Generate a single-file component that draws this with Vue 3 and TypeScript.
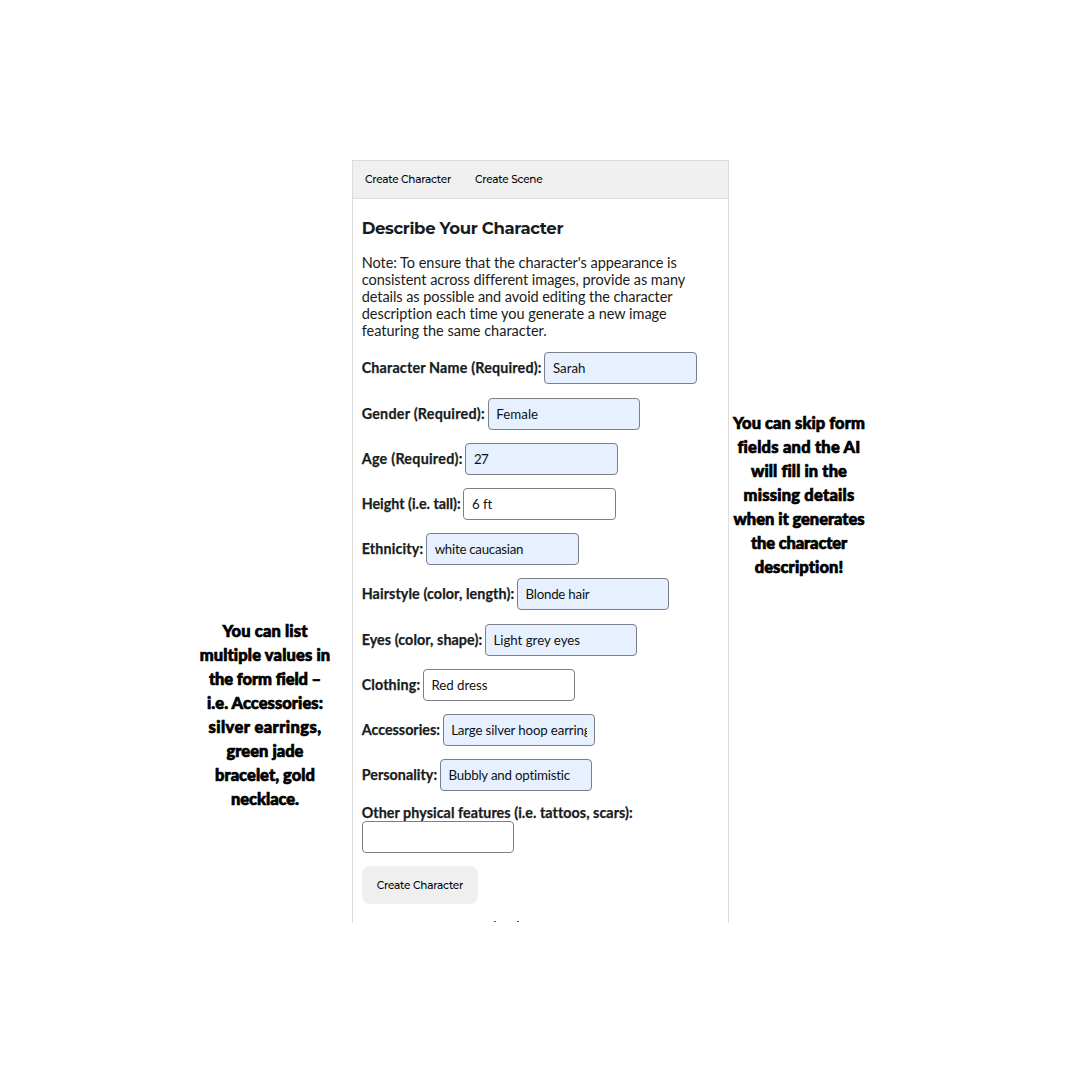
<script setup lang="ts">
interface Line { text: string; width: number }
interface Field { label: string; labelWidth: number; value: string; valueWidth: number; filled: boolean }

const tabs: Line[] = [
  { text: 'Create Character', width: 86 },
  { text: 'Create Scene', width: 67.5 },
]
const intro: Line[] = [
  { text: "Note: To ensure that the character's appearance is", width: 315 },
  { text: 'consistent across different images, provide as many', width: 323 },
  { text: 'details as possible and avoid editing the character', width: 311 },
  { text: 'description each time you generate a new image', width: 305.5 },
  { text: 'featuring the same character.', width: 185 },
]
const fields: Field[] = [
  { label: 'Character Name (Required):', labelWidth: 180, value: 'Sarah', valueWidth: 32.5, filled: true },
  { label: 'Gender (Required):', labelWidth: 123.2, value: 'Female', valueWidth: 42, filled: true },
  { label: 'Age (Required):', labelWidth: 101, value: '27', valueWidth: 14, filled: true },
  { label: 'Height (i.e. tall):', labelWidth: 99, value: '6 ft', valueWidth: 20, filled: false },
  { label: 'Ethnicity:', labelWidth: 61.7, value: 'white caucasian', valueWidth: 88.5, filled: true },
  { label: 'Hairstyle (color, length):', labelWidth: 152.5, value: 'Blonde hair', valueWidth: 64, filled: true },
  { label: 'Eyes (color, shape):', labelWidth: 120.5, value: 'Light grey eyes', valueWidth: 86.5, filled: true },
  { label: 'Clothing:', labelWidth: 58.5, value: 'Red dress', valueWidth: 56, filled: false },
  { label: 'Accessories:', labelWidth: 78.2, value: 'Large silver hoop earrings', valueWidth: 145, filled: true },
  { label: 'Personality:', labelWidth: 75.5, value: 'Bubbly and optimistic', valueWidth: 122, filled: true },
]
const leftNote: Line[] = [
  { text: 'You can list', width: 85 },
  { text: 'multiple values in', width: 131 },
  { text: 'the form field –', width: 112 },
  { text: 'i.e. Accessories:', width: 116 },
  { text: 'silver earrings,', width: 113 },
  { text: 'green jade', width: 77 },
  { text: 'bracelet, gold', width: 100 },
  { text: 'necklace.', width: 68 },
]
const rightNote: Line[] = [
  { text: 'You can skip form', width: 132 },
  { text: 'fields and the AI', width: 123 },
  { text: 'will fill in the', width: 96 },
  { text: 'missing details', width: 111 },
  { text: 'when it generates', width: 131 },
  { text: 'the character', width: 96 },
  { text: 'description!', width: 89 },
]

// Tracks a line of text so that it fills the given measure.
const vFit = {
  mounted(el: HTMLElement, binding: { value: number }) {
    const count = (el.textContent ?? '').length
    const natural = el.getBoundingClientRect().width
    el.style.letterSpacing = `${(binding.value - natural) / count}px`
  },
}
</script>

<template>
  <main class="page">
    <aside class="note note-left">
      <p v-for="l in leftNote" :key="l.text"><span v-fit="l.width">{{ l.text }}</span></p>
    </aside>

    <section class="panel">
      <nav class="tabs">
        <a v-for="t in tabs" :key="t.text"><span v-fit="t.width">{{ t.text }}</span></a>
      </nav>
      <div class="body">
        <h1><span v-fit="201.5">Describe Your Character</span></h1>
        <div class="intro">
          <p v-for="l in intro" :key="l.text"><span v-fit="l.width">{{ l.text }}</span></p>
        </div>
        <div v-for="f in fields" :key="f.label" class="field">
          <label><span v-fit="f.labelWidth">{{ f.label }}</span></label>
          <div class="input" :class="{ filled: f.filled }">
            <div class="value"><span v-fit="f.valueWidth">{{ f.value }}</span></div>
          </div>
        </div>
        <div class="other">
          <label><span v-fit="270.5">Other physical features (i.e. tattoos, scars):</span></label>
          <div class="input"></div>
        </div>
        <button type="button"><span v-fit="86.5">Create Character</span></button>
        <div class="cutoff"><i></i><i></i></div>
      </div>
    </section>

    <aside class="note note-right">
      <p v-for="l in rightNote" :key="l.text"><span v-fit="l.width">{{ l.text }}</span></p>
    </aside>
  </main>
</template>

<style>
body { margin: 0; background: #fff; }
</style>

<style scoped>
* { box-sizing: border-box; }
p, h1 { margin: 0; }
span { display: inline-block; white-space: pre; }
.page {
  width: 1080px;
  height: 1080px;
  display: flex;
  align-items: flex-start;
  padding: 160px 0 0 195px;
  overflow: hidden;
  background: #fff;
  font-family: Lato, "Open Sans", sans-serif;
}
.note {
  width: 140px;
  font-size: 16.5px;
  font-weight: 900;
  line-height: 24px;
  text-align: center;
  color: #000;
  -webkit-text-stroke: 0.7px #000;
}
.note-left { margin: 458.5px 17px 0 0; }
.note-right { margin: 250.5px 0 0 0; }
.panel {
  width: 377px;
  height: 762.5px;
  border: 1px solid #dcdcdc;
  border-bottom: 0;
  overflow: hidden;
  flex: none;
}
.tabs {
  height: 38px;
  display: flex;
  align-items: center;
  gap: 24px;
  padding: 0 12px;
  background: #f0f0f0;
  border-bottom: 1px solid #dedede;
  font: 500 10.5px/16px Montserrat, Inter, sans-serif;
  color: #000;
}
.body { padding: 18px 0 0 8.7px; color: #181c20; }
h1 {
  height: 37px;
  font: 700 16.5px/22px Montserrat, Inter, sans-serif;
}
.intro { font-size: 14.5px; line-height: 17.1px; height: 98.4px; }
.field {
  display: flex;
  align-items: center;
  gap: 2.8px;
  height: 32px;
  margin-bottom: 13.2px;
}
label {
  font-size: 14.3px;
  line-height: 18px;
  font-weight: 700;
  -webkit-text-stroke: 0.25px #181c20;
}
.input {
  width: 152.5px;
  height: 32px;
  padding: 0 7.5px;
  border: 1px solid #7b7f87;
  border-radius: 4px;
  background: #fff;
  font-size: 13.3px;
  line-height: 30px;
  color: #101214;
}
.value { overflow: hidden; height: 30px; }
.filled { background: #e7f0fe; }
.other { height: 62.1px; display: flex; flex-direction: column; }
.other label { height: 17px; line-height: 17px; }
button {
  display: block;
  width: 116.5px;
  height: 38px;
  padding: 1px 0 0;
  border: 0;
  border-radius: 8px;
  background: #efefef;
  color: #000;
  font: 500 10.5px/16px Montserrat, Inter, sans-serif;
}
.cutoff { display: flex; gap: 21px; padding: 17px 0 0 132px; }
.cutoff i { width: 2px; height: 1px; background: #555; }
</style>
